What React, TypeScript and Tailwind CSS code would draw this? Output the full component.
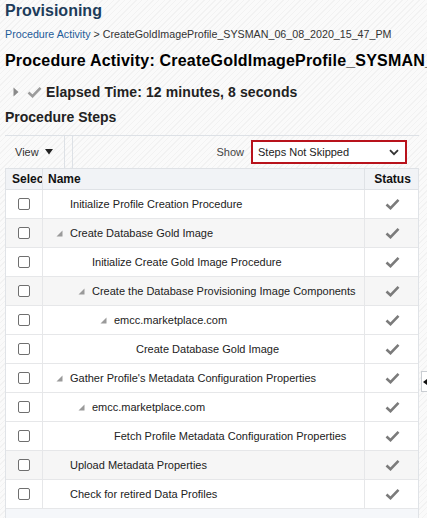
import React from "react";

type Step = { label: string; indent: number; tree?: boolean; shaded?: boolean };

const steps: Step[] = [
  { label: "Initialize Profile Creation Procedure", indent: 0 },
  { label: "Create Database Gold Image", indent: 0, tree: true, shaded: true },
  { label: "Initialize Create Gold Image Procedure", indent: 1 },
  { label: "Create the Database Provisioning Image Components", indent: 1, tree: true, shaded: true },
  { label: "emcc.marketplace.com", indent: 2, tree: true },
  { label: "Create Database Gold Image", indent: 3 },
  { label: "Gather Profile's Metadata Configuration Properties", indent: 0, tree: true },
  { label: "emcc.marketplace.com", indent: 1, tree: true },
  { label: "Fetch Profile Metadata Configuration Properties", indent: 2 },
  { label: "Upload Metadata Properties", indent: 0, shaded: true },
  { label: "Check for retired Data Profiles", indent: 0 },
];

const indentPad = ["pl-[13px]", "pl-[35px]", "pl-[57px]", "pl-[79px]"];

function Check({ className }: { className?: string }) {
  return (
    <svg width="15" height="12" viewBox="0 0 15 12" className={className}>
      <path d="M1.5 6.5 L5.5 10.2 L13.5 1.8" fill="none" stroke="currentColor" strokeWidth="2.6" />
    </svg>
  );
}

function TreeToggle() {
  return (
    <svg width="7" height="7" viewBox="0 0 7 7" className="mr-[7px] shrink-0">
      <polygon points="6.5,0.5 6.5,6.5 0.5,6.5" fill="#9a9a9a" />
    </svg>
  );
}

function StepRow({ step }: { step: Step }) {
  return (
    <div
      className={`grid h-[29px] grid-cols-[37px_322px_55px] border-b border-[#e6e7e9] ${
        step.shaded ? "bg-[#f6f6f6]" : "bg-white"
      }`}
    >
      <div className="flex items-center justify-center border-r border-[#e6e7e9]">
        <span className="h-[12px] w-[12px] rounded-[2px] border border-[#6f6f6f] bg-white" />
      </div>
      <div
        className={`flex items-center overflow-hidden border-r border-[#e6e7e9] text-[11px] text-[#222] ${indentPad[step.indent]}`}
      >
        {step.tree ? <TreeToggle /> : <span className="w-[14px] shrink-0" />}
        <span className="whitespace-nowrap">{step.label}</span>
      </div>
      <div className="flex items-center justify-center text-[#7b7b7b]">
        <Check />
      </div>
    </div>
  );
}

export default function App() {
  return (
    <div className="relative h-[518px] w-[427px] overflow-hidden bg-[repeating-linear-gradient(135deg,#f2f2f2_0px,#f2f2f2_1px,#fafafa_1px,#fafafa_4px)] font-['Liberation_Sans',Arial,sans-serif]">
      <div className="pl-[5px]">
        <h1 className="pt-[1px] text-[16px] leading-[20px] font-bold text-[#1d3c5a]">Provisioning</h1>
        <p className="mt-[6px] text-[10.7px] leading-[14px] whitespace-nowrap text-[#333]">
          <span className="text-[#1f5c99]">Procedure Activity</span> &gt; CreateGoldImageProfile_SYSMAN_06_08_2020_15_47_PM
        </p>
        <h2 className="mt-[10px] text-[16px] leading-[20px] font-bold tracking-[0.2px] whitespace-nowrap text-black">
          Procedure Activity: CreateGoldImageProfile_SYSMAN_06_08_2020_15_47_PM
        </h2>
        <div className="mt-[11px] flex h-[20px] items-center pl-[8px]">
          <svg width="6" height="10" viewBox="0 0 6 10" className="mr-[8px]">
            <polygon points="0.5,0.5 5.5,5 0.5,9.5" fill="#8a8a8a" />
          </svg>
          <Check className="mr-[4px] text-[#9b9b9b]" />
          <span className="text-[14px] font-bold tracking-[0.1px] text-[#222]">Elapsed Time: 12 minutes, 8 seconds</span>
        </div>
        <h3 className="mt-[6px] text-[14px] leading-[18px] font-bold text-[#222]">Procedure Steps</h3>

        <div className="mt-[9px] w-[414px]">
          <div className="flex h-[33px] items-center border-t border-[#dde1e6]">
            <div className="flex h-full w-[59px] items-center gap-[6px] pl-[10px] text-[11px] text-[#333]">
              View
              <svg width="8" height="6" viewBox="0 0 8 6">
                <polygon points="0,0 8,0 4,5.5" fill="#222" />
              </svg>
            </div>
            <div className="h-full w-[9px] border-x border-[#dde1e6]" />
            <div className="flex flex-1 items-center justify-end pr-[12px]">
              <span className="mr-[7px] text-[11px] text-[#444]">Show</span>
              <div className="flex h-[24px] w-[156px] items-center justify-between border-2 border-[#b8121b] bg-white pr-[6px] pl-[5px] text-[11px] text-[#222]">
                Steps Not Skipped
                <svg width="10" height="7" viewBox="0 0 10 7">
                  <path d="M1 1.2 L5 5.2 L9 1.2" fill="none" stroke="#333" strokeWidth="1.8" />
                </svg>
              </div>
            </div>
          </div>

          <div className="border-x border-[#e0e3e7] bg-[#f5f7fa]">
            <div className="grid h-[22px] grid-cols-[37px_322px_55px] border-y border-[#dfe2e6] bg-[#f1f3f6] text-[12px] font-bold text-[#111]">
              <div className="flex items-center overflow-hidden border-r border-[#dfe2e6] pl-[6px] whitespace-nowrap">Select</div>
              <div className="flex items-center border-r border-[#dfe2e6] pl-[5px]">Name</div>
              <div className="flex items-center justify-center">Status</div>
            </div>
            {steps.map((s, i) => (
              <StepRow key={i} step={s} />
            ))}
            <div className="h-[20px]" />
          </div>
        </div>
      </div>

      <div className="absolute top-[371px] left-[421px] flex h-[21px] w-[8px] items-center border border-[#c9cdd2] bg-white">
        <svg width="4" height="6" viewBox="0 0 4 6" className="ml-[1px]">
          <polygon points="4,0 4,6 0,3" fill="#111" />
        </svg>
      </div>
    </div>
  );
}
